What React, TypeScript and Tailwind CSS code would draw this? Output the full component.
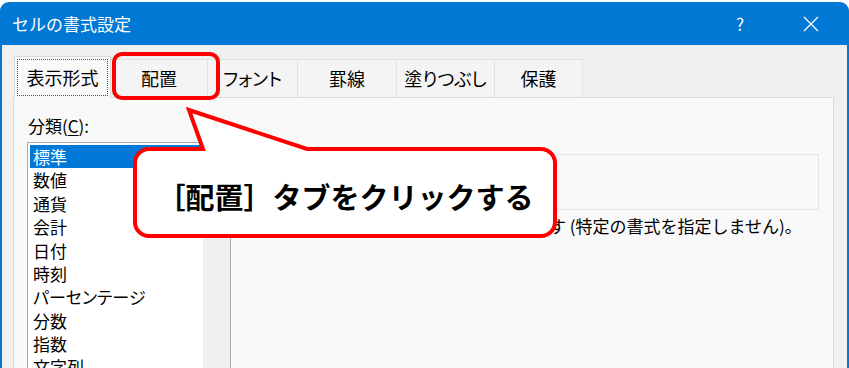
const tabs = [
  { label: '表示形式', w: 'w-[97px]', active: true },
  { label: '配置', w: 'w-[97px]' },
  { label: 'フォント', w: 'w-[90px]' },
  { label: '罫線', w: 'w-[99px]' },
  { label: '塗りつぶし', w: 'w-[98px]' },
  { label: '保護', w: 'w-[88px]' },
]

const categories = ['標準', '数値', '通貨', '会計', '日付', '時刻', 'パーセンテージ', '分数', '指数', '文字列', 'その他', 'ユーザー定義']

const App = () => {
  return (
    <div className="relative h-[368px] w-[849px] overflow-hidden bg-white pt-[2px] font-['Noto_Sans_CJK_JP',sans-serif]">
      <div className="flex h-[366px] flex-col rounded-t-[9px] bg-[#0078d4] px-[2px]">
        {/* title bar */}
        <div className="flex h-[43px] shrink-0 items-center pl-[10px] pr-[13px] text-[17px] text-white">
          <span>セルの書式設定</span>
          <span className="ml-auto flex w-[46px] justify-center">?</span>
          <span className="ml-[25px] flex w-[46px] justify-center">
            <svg width="16" height="16" viewBox="0 0 16 16" fill="none" stroke="white" strokeWidth="1.3">
              <path d="M1 1 L15 15 M15 1 L1 15" />
            </svg>
          </span>
        </div>

        {/* dialog body */}
        <div className="flex flex-1 flex-col bg-[#f0f0f0] pl-[11px] pr-[13px] [font-feature-settings:'palt']">
          <div className="flex h-[52px] shrink-0 items-end pl-[1px] text-[18px] text-black">
            {tabs.map((t) =>
              t.active ? (
                <div key={t.label} className={`${t.w} relative -mb-px flex h-[42px] border-x border-t border-[#dadada] bg-[#f9f9f9] p-[2px]`}>
                  <div className="flex flex-1 items-center justify-center border border-dotted border-[#555]">{t.label}</div>
                </div>
              ) : (
                <div key={t.label} className={`${t.w} flex h-[38px] items-center justify-center border-r border-t border-[#e3e3e3] bg-[#f4f4f4]`}>
                  {t.label}
                </div>
              )
            )}
          </div>

          <div className="flex flex-1 border border-[#dadada] bg-[#f9f9f9] pl-[13px] pr-[14px]">
            <div className="flex w-[204px] flex-col pt-[16px]">
              <div className="ml-[1px] text-[17px] leading-[24px] text-black">
                分類(<span className="underline underline-offset-2">C</span>):
              </div>
              <div className="mt-[4px] flex flex-1 border border-[#ababab]">
                <div className="flex-1 bg-white pt-[2px]">
                  {categories.map((c, i) => (
                    <div
                      key={c}
                      className={`mx-[2px] flex h-[23.4px] items-center pl-[3px] text-[17px] ${i === 0 ? 'bg-[#0078d7] text-white' : 'text-black'}`}
                    >
                      {c}
                    </div>
                  ))}
                </div>
                <div className="w-[27px] bg-[#f0f0f0]" />
              </div>
            </div>

            <div className="ml-[12px] flex flex-1 flex-col pt-[56px]">
              <div className="h-[56px] border border-[#e4e4e4] px-[8px] text-[16px] text-[#333]">サンプル</div>
              <div className="mt-[4px] whitespace-nowrap text-[17px] leading-[24px] text-black [font-feature-settings:normal]">
                標準形式では数値を標準の形で表示します (特定の書式を指定しません)。
              </div>
            </div>
          </div>
        </div>
      </div>

      {/* highlight around the 配置 tab */}
      <div className="absolute left-[112px] top-[52px] h-[48px] w-[108px] rounded-[10px] border-4 border-[#ff0000]" />

      {/* callout */}
      <svg className="pointer-events-none absolute inset-0" width="849" height="368" viewBox="0 0 849 368">
        <path
          d="M149 149 L203 149 L189 110 L307 149 L541 149 A14 14 0 0 1 555 163 L555 222 A14 14 0 0 1 541 236 L149 236 A14 14 0 0 1 135 222 L135 163 A14 14 0 0 1 149 149 Z"
          fill="white"
          stroke="#ff0000"
          strokeWidth="4"
          strokeLinejoin="miter"
        />
      </svg>
      <div className="absolute left-[135px] top-[149px] flex h-[87px] w-[420px] items-center justify-center pt-[9px] text-[29px] font-bold text-black">
        ［配置］タブをクリックする
      </div>
    </div>
  )
}

export default App
